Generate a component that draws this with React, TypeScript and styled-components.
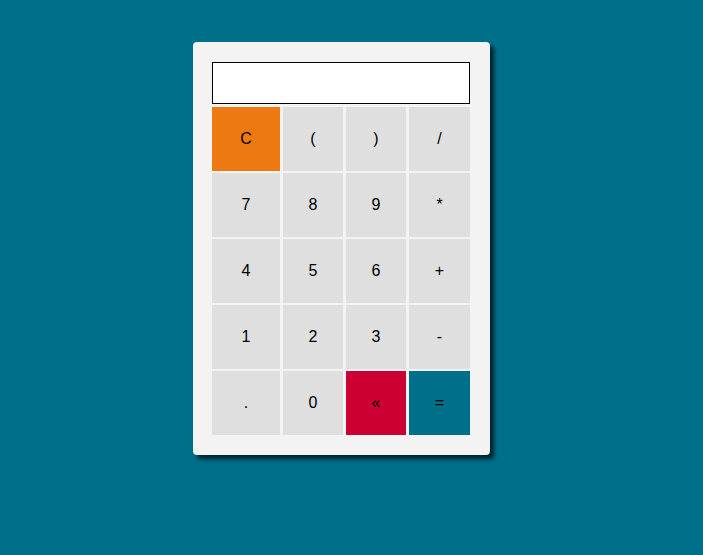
import React, { useState } from "react";
import styled, { createGlobalStyle } from "styled-components";

const Global = createGlobalStyle`
  html, body { margin: 0; padding: 0; background: #006f8a; }
  body { font-family: "Liberation Sans", Arial, sans-serif; }
`;

const Page = styled.div`
  width: 703px;
  height: 555px;
  background: #006f8a;
  display: flex;
  justify-content: flex-start;
  align-items: flex-start;
  padding: 42px 0 0 193px;
  box-sizing: border-box;
`;

const Card = styled.div`
  width: 297px;
  box-sizing: border-box;
  background: #f3f3f3;
  border-radius: 4px;
  padding: 20px 20px 20px 19px;
  box-shadow: 4px 4px 4px rgba(0, 20, 28, 0.85);
  display: flex;
  flex-direction: column;
  gap: 3px;
`;

const Display = styled.input`
  width: 258px;
  height: 42px;
  box-sizing: border-box;
  border: 1px solid #000;
  background: #fff;
  margin: 0;
  padding: 0 6px;
  font-family: "Liberation Sans", Arial, sans-serif;
  font-size: 16px;
  outline: none;
`;

const Keys = styled.div`
  display: grid;
  grid-template-columns: 68px 60px 60px 61px;
  grid-auto-rows: 64px;
  column-gap: 3px;
  row-gap: 2px;
`;

type Tone = "plain" | "clear" | "back" | "equal";
const tones: Record<Tone, string> = {
  plain: "#dfdfdf",
  clear: "#ed7a11",
  back: "#cc0033",
  equal: "#006f8a",
};

const Key = styled.button<{ $tone: Tone }>`
  border: none;
  margin: 0;
  padding: 0;
  background: ${(p) => tones[p.$tone]};
  color: #000;
  font-family: "Liberation Sans", Arial, sans-serif;
  font-size: 16px;
  display: flex;
  align-items: center;
  justify-content: center;
  cursor: pointer;
`;

const keys: { label: string; tone: Tone }[] = [
  { label: "C", tone: "clear" },
  { label: "(", tone: "plain" },
  { label: ")", tone: "plain" },
  { label: "/", tone: "plain" },
  { label: "7", tone: "plain" },
  { label: "8", tone: "plain" },
  { label: "9", tone: "plain" },
  { label: "*", tone: "plain" },
  { label: "4", tone: "plain" },
  { label: "5", tone: "plain" },
  { label: "6", tone: "plain" },
  { label: "+", tone: "plain" },
  { label: "1", tone: "plain" },
  { label: "2", tone: "plain" },
  { label: "3", tone: "plain" },
  { label: "-", tone: "plain" },
  { label: ".", tone: "plain" },
  { label: "0", tone: "plain" },
  { label: "«", tone: "back" },
  { label: "=", tone: "equal" },
];

export default function App() {
  const [value, setValue] = useState("");
  const press = (k: string) => {
    if (k === "C") setValue("");
    else if (k === "«") setValue((v) => v.slice(0, -1));
    else if (k === "=") {
      try {
        // eslint-disable-next-line no-new-func
        setValue(String(Function(`return (${value})`)()));
      } catch {
        setValue("Error");
      }
    } else setValue((v) => v + k);
  };
  return (
    <Page>
      <Global />
      <Card>
        <Display value={value} onChange={(e) => setValue(e.target.value)} />
        <Keys>
          {keys.map((k) => (
            <Key key={k.label} $tone={k.tone} onClick={() => press(k.label)}>
              {k.label}
            </Key>
          ))}
        </Keys>
      </Card>
    </Page>
  );
}
